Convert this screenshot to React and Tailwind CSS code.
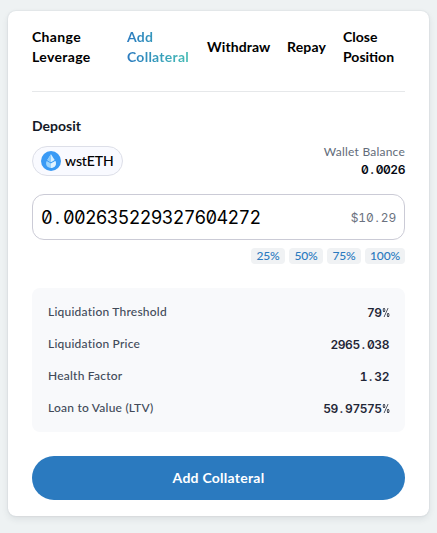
const mono = "font-['Inter',sans-serif] tabular-nums slashed-zero whitespace-nowrap";

const tabs = [
  { lines: ['Change', 'Leverage'], box: 'w-[95px]', tracking: 'tracking-[0.35px]' },
  { lines: ['Add', 'Collateral'], box: 'w-20', tracking: 'tracking-[0.25px]', active: true },
  { lines: ['Withdraw'], box: 'w-20', tracking: 'tracking-[0.1px]' },
  { lines: ['Repay'], box: 'w-14', tracking: 'tracking-[0.15px]' },
  { lines: ['Close', 'Position'], box: 'w-[62px]', tracking: 'tracking-[0px]' },
];

const stats = [
  ['Liquidation Threshold', '79%'],
  ['Liquidation Price', '2965.038'],
  ['Health Factor', '1.32'],
  ['Loan to Value (LTV)', '59.97575%'],
];

const percents = [
  ['25%', 'w-[34px]'],
  ['50%', 'w-[34px]'],
  ['75%', 'w-[34px]'],
  ['100%', 'w-10'],
];

// Gives the point and the percent sign the same advance as a digit.
function Figures({ children, className }) {
  return (
    <span className={`${mono} ${className}`}>
      {children.split(/([.%])/).map((part, i) => {
        if (part === '.') {
          return <span key={i} className="inline-block w-[0.61em] text-center tracking-normal">.</span>;
        }
        if (part === '%') {
          return (
            <span key={i} className="inline-block w-[0.61em] origin-left scale-x-[0.68] tracking-normal">%</span>
          );
        }
        return part;
      })}
    </span>
  );
}

function TokenIcon() {
  return (
    <svg viewBox="0 0 20 20" className="size-5 shrink-0">
      <circle cx="10" cy="10" r="10" fill="#3a9af5" />
      <path d="M10 3.2 13.7 9 10 11.2 6.3 9Z" fill="#d8efff" />
      <path d="M10 3.2V11.2L6.3 9Z" fill="#8ccbfb" />
      <path d="M5.7 10 10 12.6 14.3 10C16.2 13.3 13.7 17 10 17S3.8 13.3 5.7 10Z" fill="#9fd5fc" />
      <path d="M10 12.6 14.3 10C16.2 13.3 13.7 17 10 17Z" fill="#e2f3ff" />
    </svg>
  );
}

export default function App() {
  return (
    <div className="h-[533px] w-[437px] bg-[#eef2f3] px-2 pt-[11px] font-['Lato',sans-serif]">
      <main className="h-[505px] w-[421px] rounded-lg bg-white px-6 pt-4 shadow-[0_0_2px_rgba(30,40,80,0.14),0_3px_7px_rgba(30,40,60,0.09)]">
        <nav className="flex h-10 items-center text-sm leading-5 font-bold text-black">
          {tabs.map((t) => (
            <div key={t.lines[0]} className={`${t.box} ${t.tracking} shrink-0`}>
              <span
                className={
                  t.active
                    ? 'inline-block bg-linear-to-r from-[#2b7abf] to-[#48bdb5] bg-clip-text text-transparent'
                    : 'inline-block'
                }
              >
                {t.lines.map((l) => (
                  <span key={l} className="block">{l}</span>
                ))}
              </span>
            </div>
          ))}
        </nav>
        <div className="mt-6 h-px bg-[#e6e8ea]" />

        <h2 className="mt-6 h-5 text-sm leading-5 font-bold text-[#141927]">Deposit</h2>
        <div className="mt-[7px] flex h-[35px] items-start justify-between">
          <div className="mt-[3px] flex h-[30px] w-[91px] items-center gap-1 rounded-full border border-[#dddfe8] bg-[#f9faff] pl-2 text-sm font-medium tracking-[-0.1px] text-black">
            <TokenIcon />
            <span>wstETH</span>
          </div>
          <div className="flex flex-col items-end">
            <span className="text-xs leading-[18px] tracking-[0.22px] text-[#626b79]">Wallet Balance</span>
            <Figures className="text-xs leading-[17px] font-semibold tracking-[-0.45px] text-[#050912]">0.0026</Figures>
          </div>
        </div>

        <div className="mt-4 flex h-[46px] items-center justify-between rounded-xl border border-[#cbcbd6] px-2 pt-0.5">
          <Figures className="text-lg tracking-[-0.7px] text-black">0.002635229327604272</Figures>
          <Figures className="text-xs tracking-[-0.2px] text-[#6b7280]">$10.29</Figures>
        </div>
        <div className="mt-2 flex justify-end gap-1">
          {percents.map(([p, w]) => (
            <button key={p} className={`${w} h-4 rounded bg-[#f0f2f4] text-center text-xs leading-4 font-medium tracking-[-0.2px] text-[#2b7abf]`}>
              {p}
            </button>
          ))}
        </div>

        <dl className="mt-6 h-36 rounded-lg bg-[#f8f9fb] px-4 pt-2">
          {stats.map(([k, v]) => (
            <div key={k} className="flex h-8 items-center justify-between text-xs">
              <dt className="font-medium tracking-[0.22px] text-[#414a59]">{k}</dt>
              <dd className="pt-0.5">
                <Figures className="font-semibold tracking-[-0.45px] text-[#1f2636]">{v}</Figures>
              </dd>
            </div>
          ))}
        </dl>

        <button className="mt-6 h-11 w-full rounded-full bg-[#2b7abf] text-sm font-bold tracking-[0.25px] text-white">
          Add Collateral
        </button>
      </main>
    </div>
  );
}
